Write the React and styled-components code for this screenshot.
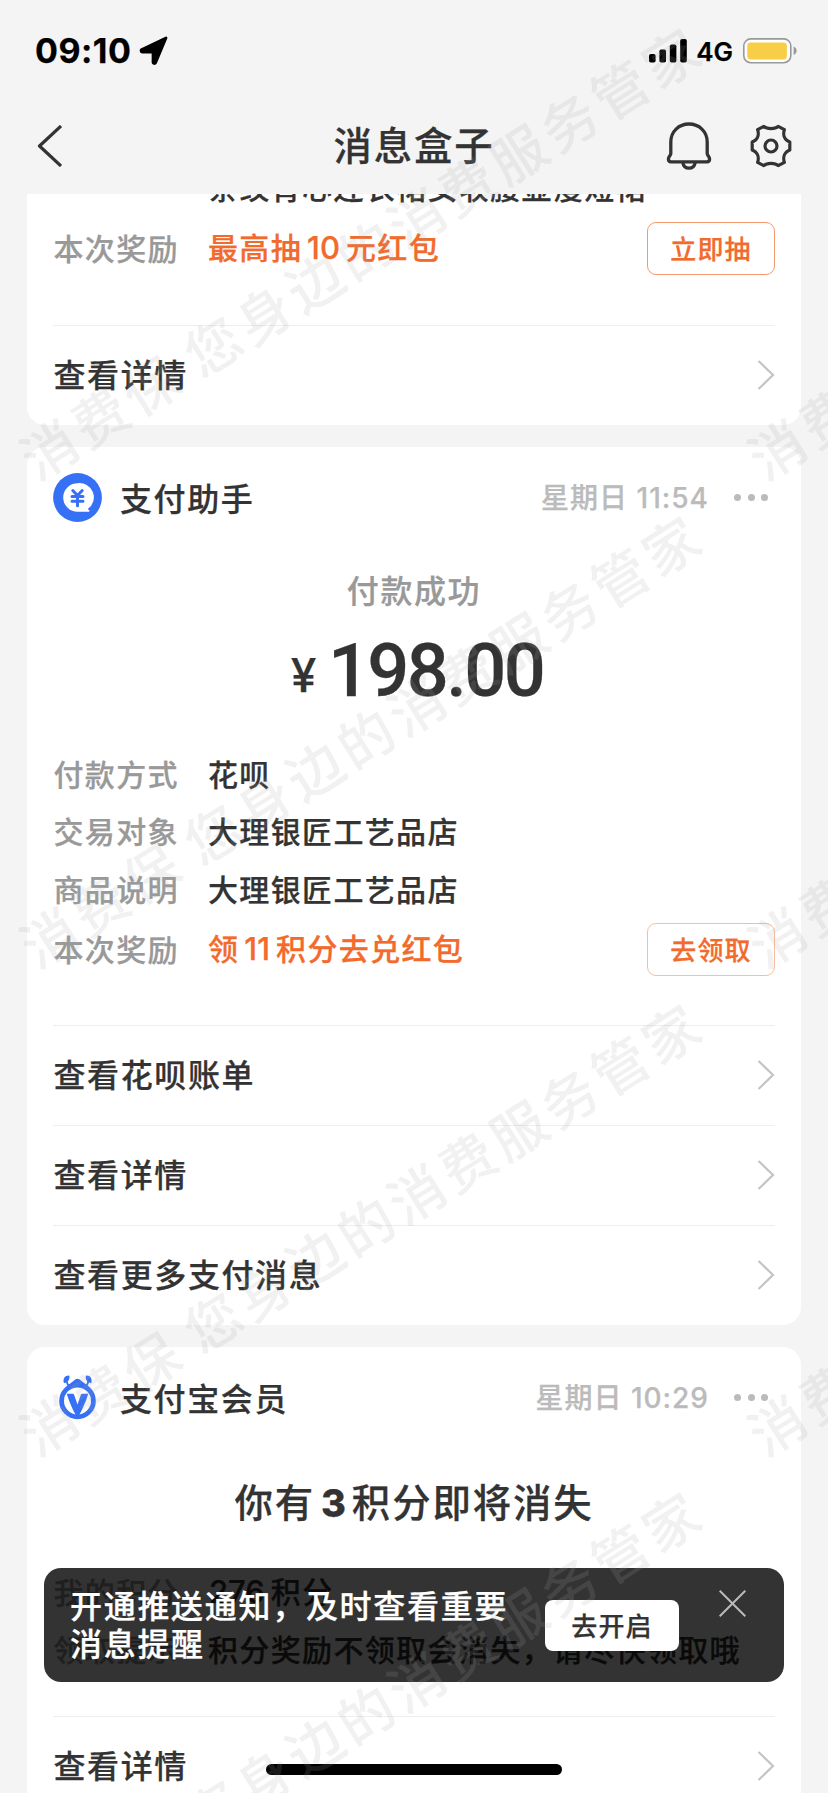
import React from "react";
import styled, { createGlobalStyle } from "styled-components";

const GlobalStyle = createGlobalStyle`
  * { box-sizing: border-box; }
  html, body { margin: 0; padding: 0; background: #f4f4f4; }
  body { overflow: hidden; }
`;

const Screen = styled.div`
  position: relative;
  width: 828px;
  height: 1793px;
  overflow: hidden;
  display: flex;
  flex-direction: column;
  background: #f4f4f4;
  color: #333;
  font-family: "Noto Sans CJK SC", sans-serif;
  font-weight: 500;
  -webkit-text-stroke: 0.25px currentColor;
`;

const StatusBar = styled.div`
  flex: none;
  height: 98px;
  padding: 4px 31px 0 35px;
  display: flex;
  align-items: center;
  justify-content: space-between;
  color: #000;
  font-family: Inter, sans-serif;
`;

const StatusGroup = styled.div`
  display: flex;
  align-items: center;
`;

const Clock = styled.span`
  font-size: 34px;
  font-weight: 700;
  line-height: 40px;
  letter-spacing: 0.5px;
  margin-right: 8px;
`;

const Network = styled.span`
  font-size: 26px;
  font-weight: 600;
  line-height: 32px;
  margin: 2px 10px 0 9px;
`;

const NavBar = styled.header`
  flex: none;
  height: 96px;
  padding: 0 36px 0 36px;
  display: grid;
  grid-template-columns: 1fr auto 1fr;
  align-items: center;
`;

const NavTitle = styled.h1`
  margin: 0;
  padding-bottom: 6px;
  font-size: 38.4px;
  font-weight: 500;
  line-height: 56px;
  letter-spacing: 1.9px;
`;

const NavActions = styled.div`
  display: flex;
  align-items: center;
  justify-content: flex-end;
  gap: 38px;
`;

const Feed = styled.main`
  flex: 1;
  min-height: 0;
  overflow: hidden;
  padding: 0 27px;
  display: flex;
  flex-direction: column;
  gap: 22px;
`;

const Card = styled.section`
  flex: none;
  padding: 0 26px;
  background: #fff;
  border-radius: ${(p) => (p.$cut ? "0 0 18px 18px" : "18px")};
`;

const CardHead = styled.div`
  height: 102px;
  display: flex;
  align-items: center;
`;

const Sender = styled.span`
  flex: 1;
  margin-left: 18px;
  padding-bottom: 2px;
  font-size: 32px;
  line-height: 48px;
  letter-spacing: 1.6px;
`;

const Time = styled.span`
  color: #bbb;
  font-family: Inter, "Noto Sans CJK SC", sans-serif;
  font-size: 28px;
  line-height: 40px;
  letter-spacing: 1px;
`;

const Dots = styled.span`
  display: flex;
  gap: 6.5px;
  margin: 0 7px 0 25px;
  &::before, &::after, & > i {
    content: "";
    width: 7px;
    height: 7px;
    border-radius: 50%;
    background: #bbb;
  }
`;

const Outcome = styled.div`
  height: 82px;
  padding-bottom: 2px;
  display: flex;
  align-items: center;
  justify-content: center;
  color: #999;
  font-size: 32px;
  letter-spacing: 1.6px;
`;

const Amount = styled.div`
  height: 114px;
  padding: 2px 0 0 6px;
  text-align: center;
  line-height: 76px;
  font-family: Roboto, sans-serif;
  font-size: 74px;
  letter-spacing: -2.6px;
`;

const Currency = styled.span`
  margin-right: 14px;
  font-family: Inter, sans-serif;
  font-size: 46px;
  line-height: 1;
  vertical-align: 4px;
`;

const Headline = styled.h2`
  margin: 0;
  height: 112px;
  padding-top: 23px;
  text-align: center;
  font-size: 38.4px;
  line-height: 56px;
  font-weight: 500;
  letter-spacing: 1.9px;
  b { font-family: Inter, sans-serif; font-weight: 800; font-size: 38px; margin: 0 4px 0 6px; }
`;

const Fields = styled.div`
  margin-top: ${(p) => p.$top || 0}px;
  padding-bottom: ${(p) => p.$bottom}px;
`;

const Field = styled.div`
  height: ${(p) => p.$height || 57.3}px;
  display: flex;
  align-items: center;
  font-size: 30px;
  line-height: 44px;
  letter-spacing: 1.35px;
  white-space: nowrap;
`;

const Label = styled.span`
  width: 154.5px;
  margin-left: 0.5px;
  padding-bottom: ${(p) => (p.$raised ? 3 : 1)}px;
  color: #999;
`;

const Value = styled.span`
  flex: 1;
  padding-bottom: ${(p) => (p.$accent ? 2 : 1)}px;
  color: ${(p) => (p.$accent ? "#f26a2c" : "#333")};
`;

const Num = styled.span`
  font-family: Inter, sans-serif;
  font-size: 31px;
  letter-spacing: 0;
  margin: 0 6px 0 ${(p) => (p.$first ? 1 : 5)}px;
`;

const ActionButton = styled.button`
  width: 128px;
  height: 53px;
  margin-top: 1px;
  padding: 0 0 1px;
  border: 1px solid ${(p) => (p.$soft ? "#f9bd9e" : "#f59a6c")};
  border-radius: 9px;
  background: #fff;
  color: #f26a2c;
  font: 500 26px/40px "Noto Sans CJK SC", sans-serif;
  letter-spacing: 1.2px;
`;

const LinkRow = styled.div`
  height: 100px;
  border-top: 1px solid #eee;
  display: flex;
  align-items: center;
  justify-content: space-between;
  font-size: 32px;
  line-height: 48px;
  letter-spacing: 1.6px;
`;

const LinkText = styled.span`
  padding: 0 0 4px 0.5px;
`;

const Toast = styled.div`
  position: absolute;
  left: 44px;
  top: 1568px;
  width: 740px;
  height: 114px;
  padding: 0 38px 0 26px;
  display: flex;
  align-items: center;
  border-radius: 17px;
  background: rgba(0, 0, 0, 0.8);
  color: #fff;
`;

const ToastText = styled.p`
  flex: none;
  width: 475px;
  margin: 0;
  padding-bottom: 4px;
  font-size: 32px;
  line-height: 38.5px;
  letter-spacing: 1.7px;
  white-space: pre;
`;

const ToastButton = styled.button`
  width: 134px;
  height: 51px;
  margin-top: 1px;
  padding: 0 0 2px;
  border: 0;
  border-radius: 8px;
  background: #fff;
  color: #333;
  font: 500 26px/40px "Noto Sans CJK SC", sans-serif;
  letter-spacing: 1.2px;
`;

const CloseIcon = styled.svg`
  margin: 0 0 44px 39.5px;
`;

const HomeIndicator = styled.div`
  position: absolute;
  left: 266px;
  top: 1764px;
  width: 296px;
  height: 11px;
  border-radius: 6px;
  background: #000;
`;

const WatermarkLayer = styled.div`
  position: absolute;
  inset: 0;
  overflow: hidden;
  pointer-events: none;
  -webkit-text-stroke: 0;
`;

const Watermark = styled.span`
  position: absolute;
  left: ${(p) => p.$x - 28}px;
  top: ${(p) => p.$y - 39}px;
  transform-origin: 28px 36px;
  transform: rotate(-32.2deg);
  font-size: 55px;
  line-height: 72px;
  font-weight: 500;
  letter-spacing: 5.1px;
  word-spacing: -4px;
  white-space: pre;
  color: rgba(165, 165, 165, 0.155);
`;

const Chevron = () => (
  <svg width="18" height="30" viewBox="0 0 18 30" fill="none" stroke="#c3c5c4" strokeWidth="2.2">
    <path d="M1.5 1 16 15 1.5 29" />
  </svg>
);

const LinkItem = ({ children }) => (
  <LinkRow>
    <LinkText>{children}</LinkText>
    <Chevron />
  </LinkRow>
);

const LocationIcon = () => (
  <svg width="30" height="30" viewBox="0 0 28 28">
    <path
      d="M25.2 1.8 15.5 25a1.3 1.3 0 0 1-2.4-.4V15H3.2a1.3 1.3 0 0 1-.5-2.5Z"
      fill="#000" stroke="#000" strokeWidth="2.6" strokeLinejoin="round"
    />
  </svg>
);

const SignalIcon = () => (
  <svg width="38" height="24" viewBox="0 0 38 24">
    <rect x="0" y="15" width="6.6" height="8.6" rx="1.8" />
    <rect x="10.4" y="10.5" width="6.6" height="13.1" rx="1.8" />
    <rect x="20.8" y="5.5" width="6.6" height="18.1" rx="1.8" />
    <rect x="31.2" y="0" width="6.6" height="23.6" rx="1.8" />
  </svg>
);

const BatteryIcon = () => (
  <svg width="54" height="26" viewBox="0 0 54 26">
    <rect x="0.8" y="0.9" width="47" height="23.8" rx="7" fill="#fff" stroke="#999" strokeWidth="1.6" />
    <rect x="4.3" y="4.4" width="39.6" height="17" rx="3.4" fill="#f7ce46" />
    <path d="M50.6 8.6c4 1.2 4 7.2 0 8.4Z" fill="#999" />
  </svg>
);

const BackIcon = () => (
  <svg width="26" height="42" viewBox="0 0 26 42" fill="none" stroke="#333" strokeWidth="3.2">
    <path d="M25 1 3.500 21 25 41" strokeLinejoin="round" />
  </svg>
);

const BellIcon = () => (
  <svg width="46" height="48" viewBox="0 0 46 48" fill="none" stroke="#333" strokeWidth="3.3" strokeLinejoin="round">
    <path d="M4.8 31.5V20C4.8 9.500 12.800 2 23 2s18.200 7.500 18.200 18v11.500c.3 2.500 2.400 3.300 2.400 5.500 0 1.700-.9 2.800-2.600 2.800H5c-1.700 0-2.600-1.100-2.600-2.800 0-2.200 2.100-3 2.400-5.500Z" />
    <path d="M16.800 40.500c.6 3.700 3.200 5.700 6.200 5.700s5.600-2 6.200-5.700" />
  </svg>
);

const GearIcon = () => (
  <svg width="42" height="44" viewBox="-21 -22 42 44" fill="none" stroke="#333" strokeWidth="3.2" strokeLinejoin="round">
    <path d="M-7.200-19.600C-4-16.600 4-16.600 7.200-19.600L13.400-16.400C11.600-11 13.600-6 18.800-4V4C13.600 6 11.600 11 13.400 16.400L7.200 19.600C4 16.600-4 16.600-7.200 19.600L-13.400 16.400C-11.600 11-13.600 6-18.800 4V-4C-13.600-6-11.600-11-13.400-16.400Z" />
    <circle r="6" />
  </svg>
);

const PayAssistantIcon = () => (
  <svg width="49" height="49" viewBox="0 0 49 49">
    <circle cx="24.500" cy="24.500" r="24.400" fill="#3570f5" />
    <path d="M24.500 10.200a14.300 14.300 0 1 0 0 28.600h11.200c.9 0 1.200-1 .5-1.500l-1.500-1.200A14.300 14.300 0 0 0 24.500 10.200Z" fill="#fff" />
    <path d="m19.800 17.500 4.700 5 4.700-5M24.500 22.500v10.300M19 23.400h11M19 28.300h11" stroke="#3570f5" strokeWidth="3" fill="none" strokeLinecap="round" />
  </svg>
);

const MemberIcon = () => (
  <svg width="49" height="49" viewBox="0 0 49 49">
    <path d="M13.500 13.500 22.300 6.500q2.200-1.600 4.400 0l8.800 7Z" fill="#3570f5" />
    <path d="M16.200 13.500c-1.800-2-2.600-4-2.600-6.500M32.800 13.500c1.800-2 2.600-4 2.600-6.500" stroke="#3570f5" strokeWidth="1.800" fill="none" />
    <path d="M16.300 2.600c-4.600-.2-6.800 3.400-5.300 7.600 4-.8 6.200-3.600 5.300-7.600ZM32.900 2.600c4.600-.2 6.800 3.400 5.300 7.600-4-.8-6.200-3.600-5.300-7.600Z" fill="#3570f5" />
    <circle cx="24.500" cy="27.900" r="15.900" fill="#fff" stroke="#3570f5" strokeWidth="4.800" />
    <path d="M13.800 20.700h5.500c1 0 1.500.4 1.900 1.200l3.300 9.600 3.300-9.600c.4-.8.9-1.200 1.900-1.200h5.500C33 28 29.500 36.500 26.200 42h-3.400C19.500 36.500 16 28 13.800 20.700Z" fill="#3570f5" />
  </svg>
);

const watermarkSpots = [
  [48, 450], [48, 938], [48, 1426], [48, 1914],
  [776, 450], [776, 938], [776, 1426],
];

export default function App() {
  return (
    <Screen>
      <GlobalStyle />
      <StatusBar>
        <StatusGroup>
          <Clock>09:10</Clock>
          <LocationIcon />
        </StatusGroup>
        <StatusGroup>
          <SignalIcon />
          <Network>4G</Network>
          <BatteryIcon />
        </StatusGroup>
      </StatusBar>
      <NavBar>
        <BackIcon />
        <NavTitle>消息盒子</NavTitle>
        <NavActions>
          <BellIcon />
          <GearIcon />
        </NavActions>
      </NavBar>
      <Feed>
        <Card $cut>
          <Fields $top={-36.5} $bottom={43}>
            <Field>
              <Label />
              <Value>条纹背心连衣裙女收腰显瘦短裙</Value>
            </Field>
            <Field $height={67}>
              <Label $raised>本次奖励</Label>
              <Value $accent>最高抽<Num>10</Num>元红包</Value>
              <ActionButton>立即抽</ActionButton>
            </Field>
          </Fields>
          <LinkItem>查看详情</LinkItem>
        </Card>
        <Card>
          <CardHead>
            <PayAssistantIcon />
            <Sender>支付助手</Sender>
            <Time>星期日 11:54</Time>
            <Dots><i /></Dots>
          </CardHead>
          <Outcome>付款成功</Outcome>
          <Amount><Currency>¥</Currency>198.00</Amount>
          <Fields $bottom={43}>
            <Field><Label>付款方式</Label><Value>花呗</Value></Field>
            <Field><Label>交易对象</Label><Value>大理银匠工艺品店</Value></Field>
            <Field><Label>商品说明</Label><Value>大理银匠工艺品店</Value></Field>
            <Field $height={65}>
              <Label $raised>本次奖励</Label>
              <Value $accent>领<Num>11</Num>积分去兑红包</Value>
              <ActionButton $soft>去领取</ActionButton>
            </Field>
          </Fields>
          <LinkItem>查看花呗账单</LinkItem>
          <LinkItem>查看详情</LinkItem>
          <LinkItem>查看更多支付消息</LinkItem>
        </Card>
        <Card>
          <CardHead>
            <MemberIcon />
            <Sender>支付宝会员</Sender>
            <Time>星期日 10:29</Time>
            <Dots><i /></Dots>
          </CardHead>
          <Headline>你有<b>3</b>积分即将消失</Headline>
          <Fields $top={2} $bottom={38.5}>
            <Field><Label>我的积分</Label><Value><Num $first>276</Num>积分</Value></Field>
            <Field><Label>领取提示</Label><Value>积分奖励不领取会消失，请尽快领取哦</Value></Field>
          </Fields>
          <LinkItem>查看详情</LinkItem>
        </Card>
      </Feed>
      <Toast>
        <ToastText>{"开通推送通知，及时查看重要\n消息提醒"}</ToastText>
        <ToastButton>去开启</ToastButton>
        <CloseIcon width="27" height="27" viewBox="0 0 27 27" stroke="#bbb" strokeWidth="2">
          <path d="m.7.7 25.600 25.600M26.300.7.7 26.300" />
        </CloseIcon>
      </Toast>
      <HomeIndicator />
      <WatermarkLayer>
        {watermarkSpots.map(([x, y]) => (
          <Watermark key={`${x}-${y}`} $x={x} $y={y}>消费保 您身边的消费服务管家</Watermark>
        ))}
      </WatermarkLayer>
    </Screen>
  );
}
